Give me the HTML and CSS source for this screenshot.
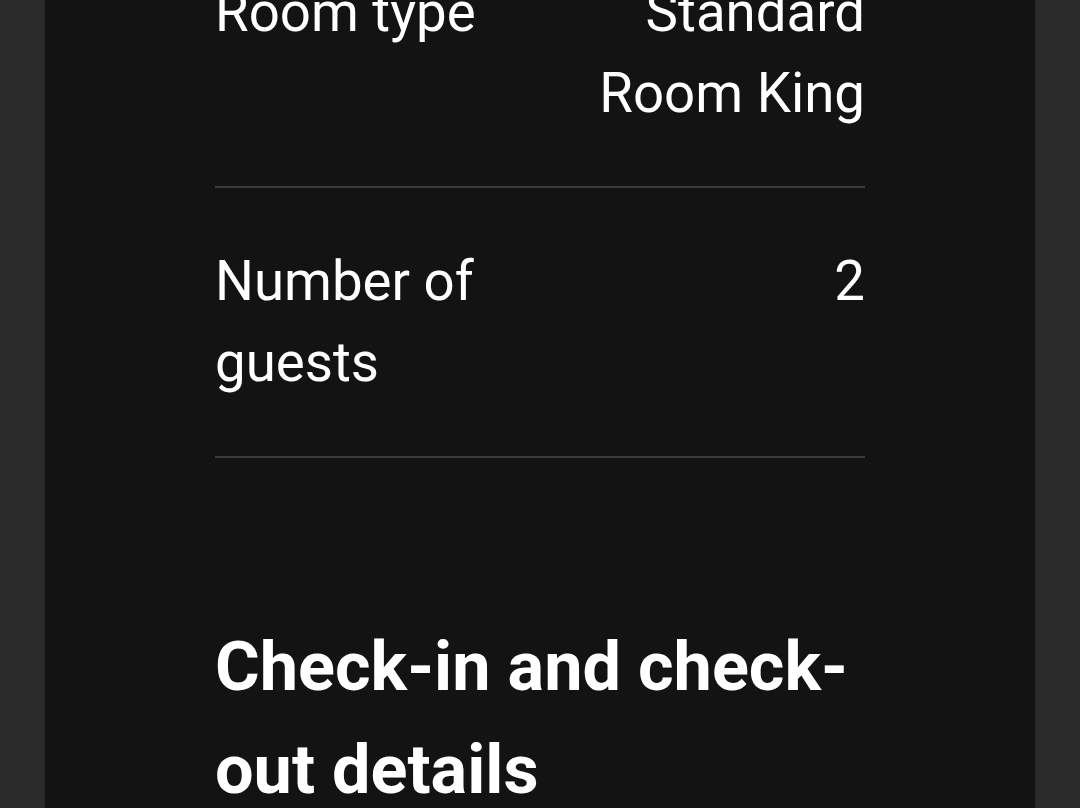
FILE: index.html
```html
<!DOCTYPE html>
<html lang="en">
<head>
<meta charset="utf-8">
<title>Booking details</title>
<link rel="stylesheet" href="styles.css">
</head>
<body>
<main class="panel">
  <dl class="details">
    <div class="row">
      <dt class="label">Room type</dt>
      <dd class="value">Standard Room King</dd>
    </div>
    <div class="row">
      <dt class="label">Number of guests</dt>
      <dd class="value">2</dd>
    </div>
  </dl>
  <h2 class="section-title">Check-in and check-out details</h2>
</main>
</body>
</html>
```

FILE: styles.css
```css
html, body {
  margin: 0;
  padding: 0;
}
body {
  background: #2b2b2b;
  font-family: Roboto, "Noto Sans", Arial, sans-serif;
  color: #ffffff;
  height: 808px;
  overflow: hidden;
}
.panel {
  margin: -81px 45px 0;
  background: #131313;
  padding: 0 170px 200px;
  min-height: 1000px;
}
.details {
  margin: 0;
  padding: 0;
}
.row {
  display: flex;
  justify-content: space-between;
  gap: 24px;
  padding: 53px 0 53px;
  border-bottom: 2px solid #3a3a3a;
  font-size: 54.6px;
  line-height: 81px;
}
.row:first-child {
  padding-bottom: 52px;
}
.label, .value {
  margin: 0;
  flex: 1 1 0;
}
.value {
  text-align: right;
}
.section-title {
  margin: 158px 0 0;
  font-size: 68.4px;
  line-height: 103px;
  font-weight: 700;
}
```
